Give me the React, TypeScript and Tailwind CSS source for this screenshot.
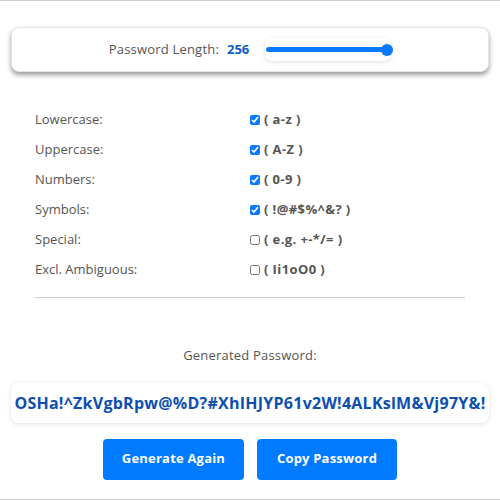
const options = [
  { label: "Lowercase:", range: "( a-z )", checked: true },
  { label: "Uppercase:", range: "( A-Z )", checked: true },
  { label: "Numbers:", range: "( 0-9 )", checked: true },
  { label: "Symbols:", range: "( !@#$%^&? )", checked: true },
  { label: "Special:", range: "( e.g. +-*/= )", checked: false },
  { label: "Excl. Ambiguous:", range: "( Ii1oO0 )", checked: false },
];

const password = "OSHa!^ZkVgbRpw@%D?#XhIHJYP61v2W!4ALKslM&Vj97Y&!";

function LengthSlider({ percent }: { percent: number }) {
  return (
    <div className="w-[126px] h-[23px] bg-white rounded-md shadow-[0_1px_4px_rgba(0,0,0,0.12)] flex items-center px-[1px]">
      <div className="relative w-full h-[5px] bg-[#0a7aff] rounded-full">
        <div
          className="absolute top-1/2 -translate-y-1/2 w-[12px] h-[12px] rounded-full bg-[#0a7aff]"
          style={{ left: `calc(${percent}% - 9px)` }}
        />
      </div>
    </div>
  );
}

export default function App() {
  return (
    <div
      className="w-full h-[500px] bg-white border-t border-b border-[#cfcfcf] text-[#555]"
      style={{ fontFamily: "'Open Sans', 'Noto Sans', sans-serif" }}
    >
      <div className="mt-[26px] mx-[11px] h-[45px] rounded-lg bg-white border border-[#e4e4e4] shadow-[0_3px_5px_rgba(0,0,0,0.4)] flex items-center justify-center">
        <span className="text-[13px] tracking-[0.2px]">Password Length:</span>
        <span className="ml-[8px] text-[13px] font-bold text-[#0d5bbf]">256</span>
        <div className="ml-[16px]">
          <LengthSlider percent={100} />
        </div>
      </div>

      <div className="mt-[33px] px-[35px]">
        {options.map((opt) => (
          <div key={opt.label} className="h-[30px] flex items-center">
            <span className="w-[215px] text-[13px]">{opt.label}</span>
            <input
              type="checkbox"
              checked={opt.checked}
              readOnly
              className="w-[10px] h-[10px] accent-[#0a7aff] m-0"
            />
            <span className="ml-[4px] text-[13px] font-bold tracking-[0.4px]">{opt.range}</span>
          </div>
        ))}
        <div className="mt-[12px] border-t border-[#cfcfcf]" />
      </div>

      <div className="mt-[48px] text-center text-[13px] tracking-[0.2px]">Generated Password:</div>

      <div className="mt-[17px] mx-[11px] h-[40px] rounded-lg bg-white shadow-[0_1px_5px_rgba(0,0,0,0.12)] flex items-center justify-center overflow-hidden">
        <span className="text-[16px] font-bold tracking-[0.25px] text-[#0d4fb0] whitespace-nowrap">{password}</span>
      </div>

      <div className="mt-[16px] flex justify-center gap-[13px]">
        <button className="w-[141px] h-[41px] rounded bg-[#007bff] text-white text-[13px] font-bold tracking-[0.2px]">
          Generate Again
        </button>
        <button className="w-[140px] h-[41px] rounded bg-[#007bff] text-white text-[13px] font-bold tracking-[0.2px]">
          Copy Password
        </button>
      </div>
    </div>
  );
}
